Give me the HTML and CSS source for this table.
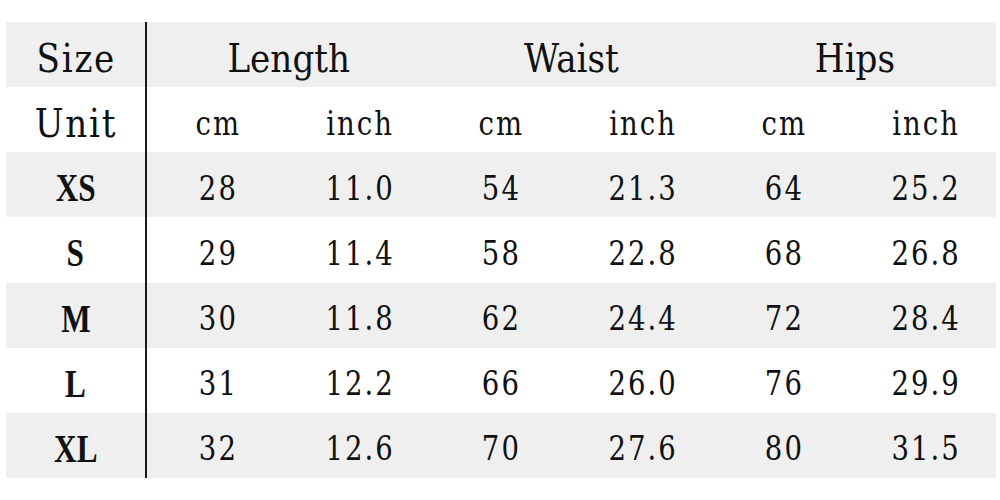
FILE: index.html
```html
<!DOCTYPE html>
<html>
<head>
<meta charset="utf-8">
<link rel="stylesheet" href="styles.css">
</head>
<body>
<div class="sheet">
  <div class="row gray">
    <div class="size head"><span>Size</span></div>
    <div class="group"><span>Length</span></div>
    <div class="group"><span>Waist</span></div>
    <div class="group"><span>Hips</span></div>
  </div>
  <div class="row">
    <div class="size head"><span>Unit</span></div>
    <div class="cell"><span>cm</span></div>
    <div class="cell"><span>inch</span></div>
    <div class="cell"><span>cm</span></div>
    <div class="cell"><span>inch</span></div>
    <div class="cell"><span>cm</span></div>
    <div class="cell"><span>inch</span></div>
  </div>
  <div class="row gray">
    <div class="size lbl"><span>XS</span></div>
    <div class="cell"><span>28</span></div>
    <div class="cell"><span>11.0</span></div>
    <div class="cell"><span>54</span></div>
    <div class="cell"><span>21.3</span></div>
    <div class="cell"><span>64</span></div>
    <div class="cell"><span>25.2</span></div>
  </div>
  <div class="row">
    <div class="size lbl"><span>S</span></div>
    <div class="cell"><span>29</span></div>
    <div class="cell"><span>11.4</span></div>
    <div class="cell"><span>58</span></div>
    <div class="cell"><span>22.8</span></div>
    <div class="cell"><span>68</span></div>
    <div class="cell"><span>26.8</span></div>
  </div>
  <div class="row gray">
    <div class="size lbl"><span>M</span></div>
    <div class="cell"><span>30</span></div>
    <div class="cell"><span>11.8</span></div>
    <div class="cell"><span>62</span></div>
    <div class="cell"><span>24.4</span></div>
    <div class="cell"><span>72</span></div>
    <div class="cell"><span>28.4</span></div>
  </div>
  <div class="row">
    <div class="size lbl"><span>L</span></div>
    <div class="cell"><span>31</span></div>
    <div class="cell"><span>12.2</span></div>
    <div class="cell"><span>66</span></div>
    <div class="cell"><span>26.0</span></div>
    <div class="cell"><span>76</span></div>
    <div class="cell"><span>29.9</span></div>
  </div>
  <div class="row gray">
    <div class="size lbl"><span>XL</span></div>
    <div class="cell"><span>32</span></div>
    <div class="cell"><span>12.6</span></div>
    <div class="cell"><span>70</span></div>
    <div class="cell"><span>27.6</span></div>
    <div class="cell"><span>80</span></div>
    <div class="cell"><span>31.5</span></div>
  </div>
</div>
</body>
</html>
```
FILE: styles.css
```css
html, body {
  margin: 0;
  padding: 0;
  background: #ffffff;
}
body {
  width: 1000px;
  height: 500px;
  overflow: hidden;
  font-family: "DejaVu Serif", "Liberation Serif", serif;
  color: #111111;
}
.sheet {
  padding: 22px 4px 0 6px;
  width: 990px;
}
.row {
  display: grid;
  grid-template-columns: 141px repeat(6, 1fr);
  height: 65.15px;
}
.row.gray {
  background: #efefef;
}
.row > div {
  display: flex;
  align-items: center;
  justify-content: center;
  padding-top: 6px;
  box-sizing: border-box;
}
.size {
  border-right: 2px solid #1a1a1a;
}
.group {
  grid-column: span 2;
}
.head span,
.group span {
  display: inline-block;
  font-size: 40px;
  transform: scaleX(0.855);
}
.head span {
  letter-spacing: 2px;
  padding-left: 2px;
}
.lbl span {
  display: inline-block;
  font-family: "Liberation Serif", serif;
  font-size: 40px;
  font-weight: bold;
  transform: scaleX(0.78);
}
.cell span {
  display: inline-block;
  font-size: 34px;
  letter-spacing: 2.5px;
  padding-left: 2.5px;
  transform: scaleX(0.81);
}
```
